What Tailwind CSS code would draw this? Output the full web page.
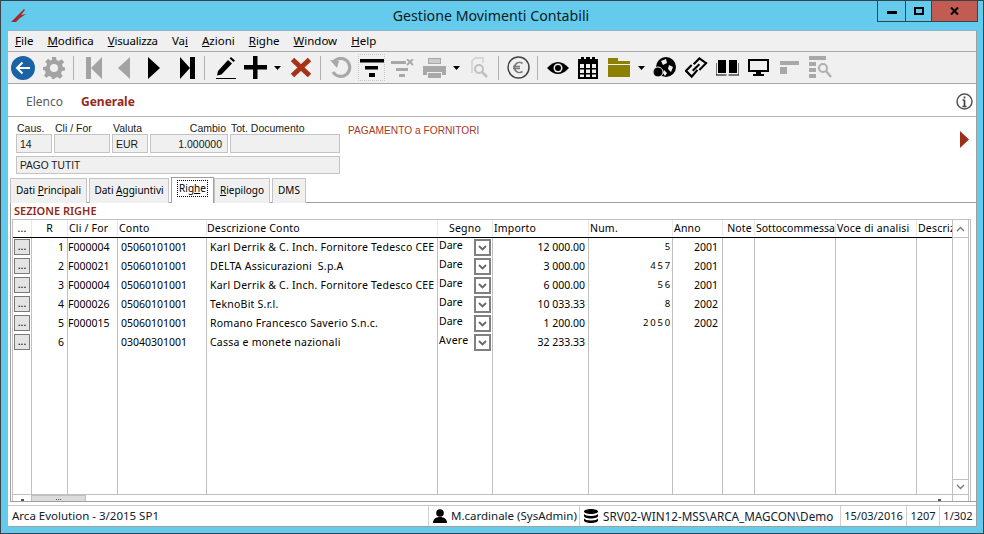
<!DOCTYPE html>
<html><head><meta charset="utf-8"><title>Gestione Movimenti Contabili</title>
<script src="https://cdn.jsdelivr.net/npm/@tailwindcss/browser@4"></script></head>
<body class="m-0 overflow-hidden bg-[#65cbec]">
<div class="relative w-[984px] h-[534px] flex flex-col border border-[#38434c] bg-[#65cbec] pl-[7px] pr-[7px] pb-[7px] font-['Noto_Sans',sans-serif] text-black overflow-hidden">
  <!-- title bar -->
  <header class="h-[29px] shrink-0 flex items-start relative">
    <svg class="absolute left-[3px] top-[7px]" width="16" height="15" viewBox="0 0 16 15"><path d="M0 14 L6 8 L13 1 L14 2 L10 7 L15 6 L9 10 L5 14 Z" fill="#a32a26"/></svg>
    <h1 class="w-full text-center text-[14.2px] leading-[30px] font-normal text-[#0b1b26] pr-[2px]">Gestione Movimenti Contabili</h1>
    <div class="absolute right-[-2px] top-[-1px] h-[22px] flex border border-[#38434c]">
      <div class="w-[28px] border-r border-[#38434c] flex items-center justify-center"><span class="block w-[10px] h-[3px] bg-black mt-[3px]"></span></div>
      <div class="w-[26px] border-r border-[#38434c] flex items-center justify-center"><span class="block w-[10px] h-[8px] border-2 border-black"></span></div>
      <div class="w-[45px] bg-[#c25b51] flex items-center justify-center"><svg width="9" height="8" viewBox="0 0 9 8"><path d="M1 0.5 L8 7.5 M8 0.5 L1 7.5" stroke="#000" stroke-width="2"/></svg></div>
    </div>
  </header>
  <div class="flex-1 flex flex-col min-h-0 border-t border-[#8fb4c8] bg-[#f0f0f0] relative shadow-[1px_1px_0_#a0a0a0]">
    <!-- menu -->
    <nav class="h-[20px] shrink-0 flex items-center text-[11.5px] leading-[20px] pl-[7px] gap-[14px]">
      <span><u>F</u>ile</span><span><u>M</u>odifica</span><span class="tracking-[-0.2px]"><u>V</u>isualizza</span><span>Va<u>i</u></span><span><u>A</u>zioni</span><span><u>R</u>ighe</span><span><u>W</u>indow</span><span><u>H</u>elp</span>
    </nav>
    <!-- toolbar -->
    <div class="h-[33px] shrink-0 border-y border-[#a8a8a8] flex items-center relative">
      <svg class="ml-[3px]" width="24" height="24" viewBox="0 0 24 24"><circle cx="12" cy="12" r="12" fill="#1a63a6"/><path d="M19 12H6M11.5 6.5 6 12l5.5 5.5" stroke="#fff" stroke-width="2" fill="none"/></svg>
      <svg class="ml-[8px]" width="22" height="22" viewBox="0 0 22 22"><path d="M9 0h4l.5 3 2.5 1 2.5-1.7 2.700 2.700L19 7.500l1 2.500 2 .5v3l-3 .5-1 2.500 1.700 2.500-2.700 2.700-2.500-1.700-2.500 1-.5 1H9l-.5-2-2.500-1-2.500 1.700L1 18.500 2.700 16 2 13.500l-2-.5v-3l3-.5 1-2.500L2.300 4.500 5 1.800 7.500 3.500 9 3z" fill="#a3a3a3"/><circle cx="11" cy="11" r="4" fill="#f0f0f0"/></svg>
      <span class="ml-[8px] w-px h-[24px] bg-[#b0b0b0]"></span>
      <svg class="ml-[12px]" width="16" height="22" viewBox="0 0 16 22"><path d="M0 0h5v22H0zM16 0v22L5 11z" fill="#a3a3a3"/></svg>
      <svg class="ml-[16px]" width="12" height="22" viewBox="0 0 12 22"><path d="M12 0v22L0 11z" fill="#a3a3a3"/></svg>
      <svg class="ml-[18px]" width="12" height="22" viewBox="0 0 12 22"><path d="M0 0v22L12 11z" fill="#000"/></svg>
      <svg class="ml-[20px]" width="15" height="22" viewBox="0 0 15 22"><path d="M0 0l10 11L0 22zM10 0h5v22h-5z" fill="#000"/></svg>
      <span class="ml-[9px] w-px h-[24px] bg-[#b0b0b0]"></span>
      <svg class="ml-[10px]" width="21" height="22" viewBox="0 0 21 22"><path d="M3 14 L13 3 L17 6.500 L6.500 17.500 L2 18.500Z M14.500 1.500 L16 0 L20 3.500 L18.500 5Z" fill="#000"/><path d="M1 21.500h20" stroke="#000"/></svg>
      <svg class="ml-[8px]" width="23" height="23" viewBox="0 0 23 23"><path d="M9 0h4.500v9H23v4.500h-9.500V23H9v-9.500H0V9h9z" fill="#000"/></svg>
      <svg class="ml-[7px]" width="7" height="4" viewBox="0 0 7 4"><path d="M0 0h7L3.500 4z" fill="#000"/></svg>
      <svg class="ml-[9px]" width="22" height="21" viewBox="0 0 22 21"><path d="M2.500 2.500 19.500 18.500M19.500 2.500 2.500 18.500" stroke="#a83216" stroke-width="5"/></svg>
      <span class="ml-[8px] w-px h-[24px] bg-[#b0b0b0]"></span>
      <svg class="ml-[9px]" width="22" height="22" viewBox="0 0 22 22"><path d="M3.500 5A9 9 0 1 1 3 15" fill="none" stroke="#a8a8a8" stroke-width="3.200"/><path d="M0 3l9 1-2 7z" fill="#a8a8a8"/></svg>
      <span class="ml-[7px] w-[25px] h-[25px] outline-1 outline-dotted outline-[#c8c8c8] flex items-center justify-center"><svg width="24" height="18" viewBox="0 0 24 18"><path d="M0 0h24v3.500H0zM5 7h13v3.500H5zM9 14h6v4H9z" fill="#000"/></svg></span>
      <svg class="ml-[7px]" width="23" height="18" viewBox="0 0 23 18"><path d="M0 2h15v3H0zM5 9h12v3H5zM8 15h6v3H8z" fill="#a8a8a8"/><path d="M16 0l6 6M22 0l-6 6" stroke="#a8a8a8" stroke-width="1.800"/></svg>
      <svg class="ml-[9px]" width="23" height="20" viewBox="0 0 23 20"><path d="M5 0h13v6H5zM0 8h23v9h-4v-3H4v3H0zM5 15h13v5H5z" fill="#a8a8a8"/><path d="M6 2h11M6 4h11" stroke="#f0f0f0"/></svg>
      <svg class="ml-[7px]" width="7" height="4" viewBox="0 0 7 4"><path d="M0 0h7L3.500 4z" fill="#000"/></svg>
      <svg class="ml-[11px]" width="17" height="22" viewBox="0 0 17 22"><path d="M1 16V4l3-3h8v5" fill="none" stroke="#d0d0d0" stroke-width="1.500"/><circle cx="8" cy="12" r="4" fill="none" stroke="#c0c0c0" stroke-width="2"/><path d="M11 15l5 5" stroke="#c0c0c0" stroke-width="2.500"/></svg>
      <span class="ml-[10px] w-px h-[24px] bg-[#b0b0b0]"></span>
      <svg class="ml-[8px]" width="23" height="23" viewBox="0 0 23 23"><circle cx="11.500" cy="11.500" r="10.500" fill="none" stroke="#444" stroke-width="1.500"/><path d="M15.500 7.500A5 5 0 1 0 15.500 15.500M6 10.500h7M6 12.500h7" fill="none" stroke="#777" stroke-width="1.600"/></svg>
      <span class="ml-[7px] w-px h-[24px] bg-[#b0b0b0]"></span>
      <svg class="ml-[9px]" width="22" height="14" viewBox="0 0 22 14"><path d="M0 7Q11-5 22 7 11 19 0 7Z" fill="#000"/><circle cx="11" cy="7" r="4.500" fill="#f0f0f0"/><circle cx="11" cy="7" r="3" fill="#000"/></svg>
      <svg class="ml-[9px]" width="20" height="22" viewBox="0 0 20 22"><path d="M0 2h3V0h3v2h2V0h4v2h2V0h3v2h3v20H0z" fill="#000"/><path d="M2 7h4v4H2zM8 7h4v4H8zM14 7h4v4h-4zM2 12.500h4v3.500H2zM8 12.500h4v3.500H8zM14 12.500h4v3.500h-4zM2 17.500h4V20H2zM8 17.500h4V20H8zM14 17.500h4V20h-4z" fill="#f0f0f0"/></svg>
      <svg class="ml-[10px]" width="22" height="19" viewBox="0 0 22 19"><path d="M0 0h10v3h12v3H0zM0 7h22v12H0z" fill="#8d8000"/></svg>
      <svg class="ml-[8px]" width="7" height="4" viewBox="0 0 7 4"><path d="M0 0h7L3.500 4z" fill="#000"/></svg>
      <svg class="ml-[8px]" width="23" height="22" viewBox="0 0 23 22"><circle cx="13" cy="10" r="10" fill="#000"/><path d="M8 4l5-2 1 4-4 2zM16 8l4 2-2 5-3-3zM11 13l3 3-2 3-2-3z" fill="#f0f0f0"/><circle cx="5" cy="15" r="5" fill="#000" stroke="#f0f0f0"/></svg>
      <svg class="ml-[9px]" width="23" height="23" viewBox="0 0 24 23"><path d="M9 8l6-6 7 5-7 7M13 14l-6 7-6-6 6-6" fill="none" stroke="#000" stroke-width="2.200"/><path d="M8 15l7-7" stroke="#000" stroke-width="2.200"/></svg>
      <svg class="ml-[8px]" width="23" height="16" viewBox="0 0 23 16"><path d="M2 0h8v13H2zM13 0h8v13h-8z" fill="#000"/><path d="M0 3v12h10.500M23 3v12H12.500" fill="none" stroke="#000"/></svg>
      <svg class="ml-[9px]" width="21" height="17" viewBox="0 0 21 17"><path d="M1 1h19v11H1z" fill="none" stroke="#000" stroke-width="2"/><path d="M8 13h5v2h3v2H5v-2h3z" fill="#000"/></svg>
      <svg class="ml-[11px]" width="19" height="13" viewBox="0 0 19 13"><path d="M0 0h19v4H0zM0 6h7v7H0z" fill="#a8a8a8"/></svg>
      <svg class="ml-[10px]" width="23" height="23" viewBox="0 0 23 23"><path d="M0 0h17v4H0zM0 6h7v4H0zM0 12h7v4H0zM0 18h7v4H0z" fill="#a8a8a8"/><circle cx="14" cy="12" r="4" fill="none" stroke="#b0b0b0" stroke-width="2"/><path d="M17 15l5 6" stroke="#b0b0b0" stroke-width="2.400"/></svg>
    </div>
    <span class="absolute left-[68px] top-[53px] w-[64px] h-[4px] bg-[#9c2b1e]"></span>
    <!-- page tabs -->
    <div class="h-[33px] shrink-0 bg-white border-b border-[#b4b4b4] flex items-center pl-[18px] pt-[3px] relative">
      <span class="text-[12px] text-[#5a5a5a]">Elenco</span>
      <span class="text-[12px] font-bold text-[#95291d] ml-[18px]">Generale</span>
      <svg class="absolute right-[3px] top-[9px]" width="17" height="17" viewBox="0 0 17 17"><circle cx="8.500" cy="8.500" r="7.500" fill="none" stroke="#555" stroke-width="1.500"/><path d="M8.500 3.500v2M8.500 7v6.500M6.500 7h2M6.500 13.500h4" stroke="#444" stroke-width="1.700"/></svg>
    </div>
    <!-- form -->
    <div class="flex-1 min-h-0 bg-white flex flex-col relative">
      <div class="h-[60px] shrink-0 pl-[8px] pt-[6px] relative font-['Liberation_Sans',sans-serif] text-[10.500px] text-[#1a1a1a]">
        <div class="flex h-[11px] items-center leading-[11px]">
          <span class="w-[38px] pl-[1px]">Caus.</span><span class="w-[58px] pl-[1px]">Cli / For</span><span class="w-[38px] pl-[1px]">Valuta</span>
          <span class="w-[78px] text-right pr-[2px]">Cambio</span><span class="ml-[3px]">Tot. Documento</span>
        </div>
        <div class="flex gap-[2px] leading-[19px]">
          <div class="w-[36px] h-[19px] bg-[#f0f0f0] border border-[#c4c4c4] pl-[3px]">14</div>
          <div class="w-[56px] h-[19px] bg-[#f0f0f0] border border-[#c4c4c4]"></div>
          <div class="w-[36px] h-[19px] bg-[#f0f0f0] border border-[#c4c4c4] pl-[3px]">EUR</div>
          <div class="w-[78px] h-[19px] bg-[#f0f0f0] border border-[#c4c4c4] text-right pr-[5px]">1.000000</div>
          <div class="w-[110px] h-[19px] bg-[#f0f0f0] border border-[#c4c4c4]"></div>
        </div>
        <div class="w-[324px] h-[18px] mt-[3px] bg-[#f0f0f0] border border-[#c4c4c4] pl-[3px] leading-[17px] text-[10.200px]">PAGO TUTIT</div>
        <span class="absolute left-[340px] top-[8px] text-[10.200px] text-[#a83a28] leading-[12px]">PAGAMENTO a FORNITORI</span>
        <svg class="absolute left-[952px] top-[14px]" width="9" height="17" viewBox="0 0 9 17"><path d="M0 0l9 8.500L0 17z" fill="#9c2f1a"/></svg>
      </div>
      <!-- sub tabs -->
      <div class="h-[26px] shrink-0 flex items-end pl-[2px] gap-[2px] text-[10px] font-['Noto_Sans',sans-serif] relative z-10 -mb-px">
        <span class="w-[77px] h-[25px] pb-[2px] bg-[#f0f0f0] border border-b-0 border-[#c4c4c4] flex items-center justify-center"><span>Dati <u>P</u>rincipali</span></span>
        <span class="w-[80px] h-[25px] pb-[2px] bg-[#f0f0f0] border border-b-0 border-[#c4c4c4] flex items-center justify-center"><span>Dati <u>A</u>ggiuntivi</span></span>
        <span class="w-[43px] h-[26px] pb-[4px] bg-white border border-b-0 border-[#a0a0a0] flex items-center justify-center"><span class="outline-1 outline-dotted outline-black px-[1px]">Rig<u>h</u>e</span></span>
        <span class="w-[56px] h-[25px] pb-[2px] -ml-[2px] bg-[#f0f0f0] border border-b-0 border-[#c4c4c4] flex items-center justify-center"><span><u>R</u>iepilogo</span></span>
        <span class="w-[34px] h-[25px] pb-[2px] bg-[#f0f0f0] border border-b-0 border-[#c4c4c4] flex items-center justify-center">DMS</span>
      </div>
      <!-- panel -->
      <div class="ml-[2px] mr-[-1px] h-[300px] shrink-0 border border-[#a0a0a0] flex flex-col bg-white text-[10.500px]">
        <div class="h-[16px] shrink-0 pl-[3px] text-[11px] leading-[15px] font-semibold text-[#8f2a1c]">SEZIONE RIGHE</div>
        <div class="ml-px mr-[5px] h-[282px] shrink-0 flex border-t border-l border-r border-[#c0c0c0]">
          <div class="w-[939px] shrink-0 flex flex-col">
            <!-- header -->
            <div class="grid grid-cols-[19px_36px_50px_89px_231px_55px_96px_84px_50px_32px_81px_81px_35px] h-[18px] shrink-0 border-b border-black leading-[16px] overflow-hidden tracking-[0.2px]">
              <span class="text-center border-r border-[#e8e8e8]">...</span><span class="text-center border-r border-[#e8e8e8]">R</span><span class="pl-px border-r border-[#e8e8e8]">Cli / For</span><span class="pl-px border-r border-[#e8e8e8]">Conto</span><span class="border-r border-[#e8e8e8]">Descrizione Conto</span><span class="text-center border-r border-[#e8e8e8]">Segno</span><span class="pl-px border-r border-[#e8e8e8]">Importo</span><span class="pl-px border-r border-[#e8e8e8]">Num.</span><span class="pl-px border-r border-[#e8e8e8]">Anno</span><span class="text-right pr-[2px] border-r border-[#e8e8e8]">Note</span><span class="pl-px tracking-normal whitespace-nowrap overflow-hidden border-r border-[#e8e8e8]">Sottocommessa</span><span class="pl-px border-r border-[#e8e8e8] whitespace-nowrap">Voce di analisi</span><span class="pl-px whitespace-nowrap overflow-hidden">Descrizione</span>
            </div>
            <!-- rows -->
            <div class="grid grid-cols-[19px_36px_50px_89px_231px_55px_96px_84px_50px_32px_81px_81px_35px] h-[19px] shrink-0 leading-[18px] whitespace-nowrap overflow-hidden">
              <span class="border-r border-[#c0c0c0] pl-px pt-px"><span class="block w-[16px] h-[16px] bg-[#e4e4e4] border border-[#7a7a7a] text-center leading-[13px]">...</span></span><span class="border-r border-[#c0c0c0] text-right pr-[3px]">1</span><span class="border-r border-[#c0c0c0]">F000004</span><span class="border-r border-[#c0c0c0] pl-[3px]">05060101001</span><span class="border-r border-[#c0c0c0] pl-[3px] overflow-hidden tracking-[0.23px]">Karl Derrik &amp; C. Inch. Fornitore Tedesco CEE</span><span class="border-r border-[#c0c0c0] pl-px flex justify-between leading-[14px]">Dare<span class="block w-[17px] h-[17px] mt-px border-2 border-[#808080] mr-px flex items-center justify-center"><svg width="9" height="6" viewBox="0 0 9 6"><path d="M1 1l3.500 3.500L8 1" fill="none" stroke="#666" stroke-width="1.800"/></svg></span></span><span class="border-r border-[#c0c0c0] text-right pr-[3px]">12 000.00</span><span class="border-r border-[#c0c0c0] text-right tracking-[1.800px] text-[9.500px]">5</span><span class="border-r border-[#c0c0c0] text-right pr-[4px]">2001</span><span class="border-r border-[#c0c0c0]"></span><span class="border-r border-[#c0c0c0]"></span><span class="border-r border-[#c0c0c0]"></span><span></span>
            </div>
            <div class="grid grid-cols-[19px_36px_50px_89px_231px_55px_96px_84px_50px_32px_81px_81px_35px] h-[19px] shrink-0 leading-[18px] whitespace-nowrap overflow-hidden">
              <span class="border-r border-[#c0c0c0] pl-px pt-px"><span class="block w-[16px] h-[16px] bg-[#e4e4e4] border border-[#7a7a7a] text-center leading-[13px]">...</span></span><span class="border-r border-[#c0c0c0] text-right pr-[3px]">2</span><span class="border-r border-[#c0c0c0]">F000021</span><span class="border-r border-[#c0c0c0] pl-[3px]">05060101001</span><span class="border-r border-[#c0c0c0] pl-[3px] overflow-hidden tracking-[0.23px] whitespace-pre">DELTA Assicurazioni  S.p.A</span><span class="border-r border-[#c0c0c0] pl-px flex justify-between leading-[14px]">Dare<span class="block w-[17px] h-[17px] mt-px border-2 border-[#808080] mr-px flex items-center justify-center"><svg width="9" height="6" viewBox="0 0 9 6"><path d="M1 1l3.500 3.500L8 1" fill="none" stroke="#666" stroke-width="1.800"/></svg></span></span><span class="border-r border-[#c0c0c0] text-right pr-[3px]">3 000.00</span><span class="border-r border-[#c0c0c0] text-right tracking-[1.800px] text-[9.500px]">457</span><span class="border-r border-[#c0c0c0] text-right pr-[4px]">2001</span><span class="border-r border-[#c0c0c0]"></span><span class="border-r border-[#c0c0c0]"></span><span class="border-r border-[#c0c0c0]"></span><span></span>
            </div>
            <div class="grid grid-cols-[19px_36px_50px_89px_231px_55px_96px_84px_50px_32px_81px_81px_35px] h-[19px] shrink-0 leading-[18px] whitespace-nowrap overflow-hidden">
              <span class="border-r border-[#c0c0c0] pl-px pt-px"><span class="block w-[16px] h-[16px] bg-[#e4e4e4] border border-[#7a7a7a] text-center leading-[13px]">...</span></span><span class="border-r border-[#c0c0c0] text-right pr-[3px]">3</span><span class="border-r border-[#c0c0c0]">F000004</span><span class="border-r border-[#c0c0c0] pl-[3px]">05060101001</span><span class="border-r border-[#c0c0c0] pl-[3px] overflow-hidden tracking-[0.23px]">Karl Derrik &amp; C. Inch. Fornitore Tedesco CEE</span><span class="border-r border-[#c0c0c0] pl-px flex justify-between leading-[14px]">Dare<span class="block w-[17px] h-[17px] mt-px border-2 border-[#808080] mr-px flex items-center justify-center"><svg width="9" height="6" viewBox="0 0 9 6"><path d="M1 1l3.500 3.500L8 1" fill="none" stroke="#666" stroke-width="1.800"/></svg></span></span><span class="border-r border-[#c0c0c0] text-right pr-[3px]">6 000.00</span><span class="border-r border-[#c0c0c0] text-right tracking-[1.800px] text-[9.500px]">56</span><span class="border-r border-[#c0c0c0] text-right pr-[4px]">2001</span><span class="border-r border-[#c0c0c0]"></span><span class="border-r border-[#c0c0c0]"></span><span class="border-r border-[#c0c0c0]"></span><span></span>
            </div>
            <div class="grid grid-cols-[19px_36px_50px_89px_231px_55px_96px_84px_50px_32px_81px_81px_35px] h-[19px] shrink-0 leading-[18px] whitespace-nowrap overflow-hidden">
              <span class="border-r border-[#c0c0c0] pl-px pt-px"><span class="block w-[16px] h-[16px] bg-[#e4e4e4] border border-[#7a7a7a] text-center leading-[13px]">...</span></span><span class="border-r border-[#c0c0c0] text-right pr-[3px]">4</span><span class="border-r border-[#c0c0c0]">F000026</span><span class="border-r border-[#c0c0c0] pl-[3px]">05060101001</span><span class="border-r border-[#c0c0c0] pl-[3px] overflow-hidden tracking-[0.23px]">TeknoBit S.r.l.</span><span class="border-r border-[#c0c0c0] pl-px flex justify-between leading-[14px]">Dare<span class="block w-[17px] h-[17px] mt-px border-2 border-[#808080] mr-px flex items-center justify-center"><svg width="9" height="6" viewBox="0 0 9 6"><path d="M1 1l3.500 3.500L8 1" fill="none" stroke="#666" stroke-width="1.800"/></svg></span></span><span class="border-r border-[#c0c0c0] text-right pr-[3px]">10 033.33</span><span class="border-r border-[#c0c0c0] text-right tracking-[1.800px] text-[9.500px]">8</span><span class="border-r border-[#c0c0c0] text-right pr-[4px]">2002</span><span class="border-r border-[#c0c0c0]"></span><span class="border-r border-[#c0c0c0]"></span><span class="border-r border-[#c0c0c0]"></span><span></span>
            </div>
            <div class="grid grid-cols-[19px_36px_50px_89px_231px_55px_96px_84px_50px_32px_81px_81px_35px] h-[19px] shrink-0 leading-[18px] whitespace-nowrap overflow-hidden">
              <span class="border-r border-[#c0c0c0] pl-px pt-px"><span class="block w-[16px] h-[16px] bg-[#e4e4e4] border border-[#7a7a7a] text-center leading-[13px]">...</span></span><span class="border-r border-[#c0c0c0] text-right pr-[3px]">5</span><span class="border-r border-[#c0c0c0]">F000015</span><span class="border-r border-[#c0c0c0] pl-[3px]">05060101001</span><span class="border-r border-[#c0c0c0] pl-[3px] overflow-hidden tracking-[0.23px]">Romano Francesco Saverio S.n.c.</span><span class="border-r border-[#c0c0c0] pl-px flex justify-between leading-[14px]">Dare<span class="block w-[17px] h-[17px] mt-px border-2 border-[#808080] mr-px flex items-center justify-center"><svg width="9" height="6" viewBox="0 0 9 6"><path d="M1 1l3.500 3.500L8 1" fill="none" stroke="#666" stroke-width="1.800"/></svg></span></span><span class="border-r border-[#c0c0c0] text-right pr-[3px]">1 200.00</span><span class="border-r border-[#c0c0c0] text-right tracking-[1.800px] text-[9.500px]">2050</span><span class="border-r border-[#c0c0c0] text-right pr-[4px]">2002</span><span class="border-r border-[#c0c0c0]"></span><span class="border-r border-[#c0c0c0]"></span><span class="border-r border-[#c0c0c0]"></span><span></span>
            </div>
            <div class="grid grid-cols-[19px_36px_50px_89px_231px_55px_96px_84px_50px_32px_81px_81px_35px] h-[19px] shrink-0 leading-[18px] whitespace-nowrap overflow-hidden">
              <span class="border-r border-[#c0c0c0] pl-px pt-px"><span class="block w-[16px] h-[16px] bg-[#e4e4e4] border border-[#7a7a7a] text-center leading-[13px]">...</span></span><span class="border-r border-[#c0c0c0] text-right pr-[3px]">6</span><span class="border-r border-[#c0c0c0]"></span><span class="border-r border-[#c0c0c0] pl-[3px]">03040301001</span><span class="border-r border-[#c0c0c0] pl-[3px] overflow-hidden tracking-[0.23px]">Cassa e monete nazionali</span><span class="border-r border-[#c0c0c0] pl-px flex justify-between leading-[14px]"><span class="tracking-[0.3px]">Avere</span><span class="block w-[17px] h-[17px] mt-px border-2 border-[#808080] mr-px flex items-center justify-center"><svg width="9" height="6" viewBox="0 0 9 6"><path d="M1 1l3.500 3.500L8 1" fill="none" stroke="#666" stroke-width="1.800"/></svg></span></span><span class="border-r border-[#c0c0c0] text-right pr-[3px]">32 233.33</span><span class="border-r border-[#c0c0c0]"></span><span class="border-r border-[#c0c0c0]"></span><span class="border-r border-[#c0c0c0]"></span><span class="border-r border-[#c0c0c0]"></span><span class="border-r border-[#c0c0c0]"></span><span></span>
            </div>
            <!-- filler keeps the column lines running -->
            <div class="grid grid-cols-[19px_36px_50px_89px_231px_55px_96px_84px_50px_32px_81px_81px_35px] flex-1 min-h-0 border-b border-[#c0c0c0]">
              <span class="border-r border-[#c0c0c0]"></span><span class="border-r border-[#c0c0c0]"></span><span class="border-r border-[#c0c0c0]"></span><span class="border-r border-[#c0c0c0]"></span><span class="border-r border-[#c0c0c0]"></span><span class="border-r border-[#c0c0c0]"></span><span class="border-r border-[#c0c0c0]"></span><span class="border-r border-[#c0c0c0]"></span><span class="border-r border-[#c0c0c0]"></span><span class="border-r border-[#c0c0c0]"></span><span class="border-r border-[#c0c0c0]"></span><span class="border-r border-[#c0c0c0]"></span><span></span>
            </div>
            <!-- horizontal scrollbar -->
            <div class="h-[6px] shrink-0 flex overflow-hidden">
              <span class="w-[18px] flex items-end justify-center"><span class="block w-[3px] h-[2px] bg-[#555]"></span></span>
              <span class="w-[55px] h-[7px] bg-[#dcdcdc] border border-[#c0c0c0] flex items-start justify-center gap-px pt-[3px]"><span class="block w-px h-px bg-[#555]"></span><span class="block w-px h-px bg-[#555]"></span><span class="block w-px h-px bg-[#555]"></span></span>
              <span class="ml-[852px] flex items-end"><span class="block w-[3px] h-[2px] bg-[#555]"></span></span>
            </div>
          </div>
          <!-- vertical scrollbar -->
          <div class="w-[17px] shrink-0 flex flex-col justify-between border-x border-[#c0c0c0] pb-[6px]">
            <div class="h-[18px] border-b border-[#c0c0c0] flex items-center justify-center"><svg width="9" height="6" viewBox="0 0 9 6"><path d="M1 5l3.500-3.500L8 5" fill="none" stroke="#777" stroke-width="1.300"/></svg></div>
            <div class="h-[16px] border-y border-[#c0c0c0] flex items-center justify-center"><svg width="9" height="6" viewBox="0 0 9 6"><path d="M1 1l3.500 3.500L8 1" fill="none" stroke="#777" stroke-width="1.300"/></svg></div>
          </div>
        </div>
      </div>
      <!-- status bar -->
      <footer class="mt-auto h-[21px] shrink-0 bg-white border-t border-[#c8c8c8] flex items-center text-[11.500px] leading-[20px] text-[#10202c] whitespace-nowrap">
        <span class="w-[420px] pl-[4px]">Arca Evolution - 3/2015 SP1</span>
        <span class="w-[151px] h-full border-l border-[#d0d0d0] flex items-center pl-[4px] gap-[4px]"><svg width="14" height="14" viewBox="0 0 14 14"><circle cx="7" cy="4" r="3.800" fill="#000"/><path d="M0 14c0-4 3-6 7-6s7 2 7 6z" fill="#000"/></svg><span>M.cardinale (SysAdmin)</span></span>
        <span class="w-[261px] h-full border-l border-[#d0d0d0] flex items-center pl-[4px] gap-[5px]"><svg width="14" height="14" viewBox="0 0 14 14"><path d="M0 2.500C0 1 3 0 7 0s7 1 7 2.500S11 5 7 5 0 4 0 2.500zM0 5c1 1.300 3 2 7 2s6-.7 7-2v2c0 1.500-3 2.500-7 2.500S0 8.500 0 7zM0 9.500c1 1.300 3 2 7 2s6-.7 7-2v2C14 13 11 14 7 14s-7-1-7-2.500z" fill="#000"/></svg><span class="text-[11.700px]">SRV02-WIN12-MSS\ARCA_MAGCON\Demo</span></span>
        <span class="w-[66px] h-full border-l border-[#d0d0d0] text-center text-[11px]">15/03/2016</span>
        <span class="w-[33px] h-full border-l border-[#d0d0d0] text-center text-[11px]">1207</span>
        <span class="flex-1 h-full border-l border-[#d0d0d0] text-center text-[11px]">1/302</span>
      </footer>
    </div>
  </div>
</div>
</body></html>
